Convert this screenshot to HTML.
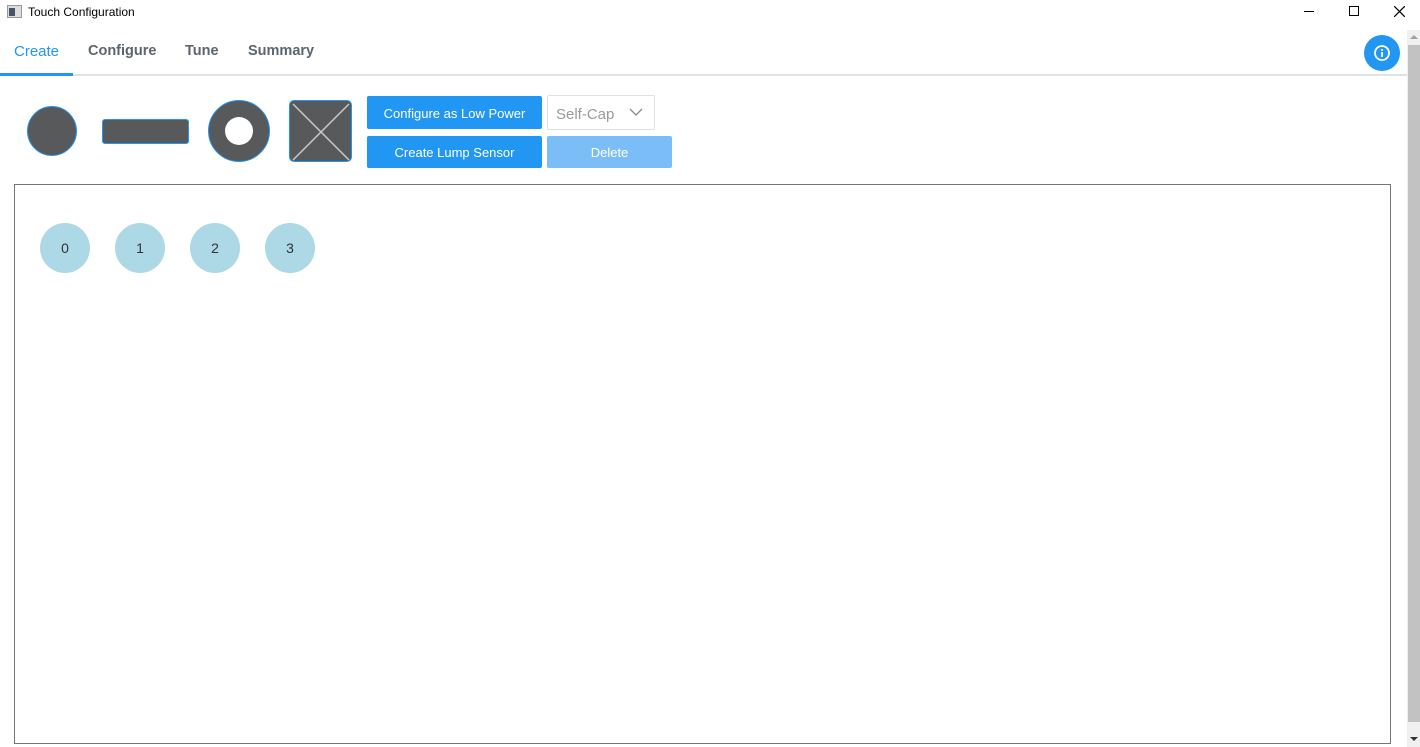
<!DOCTYPE html>
<html><head><meta charset="utf-8"><style>
*{box-sizing:border-box;margin:0;padding:0}
body{width:1420px;height:747px;background:#fff;font-family:"Liberation Sans",sans-serif;position:relative;overflow:hidden}
.a{position:absolute}
.tab{position:absolute;top:43px;font-size:14.5px;color:#5a6570;font-weight:bold}
.btn{position:absolute;background:#2196f3;color:#fff;font-size:13px;text-align:center;border-radius:2px}
.c{position:absolute;width:50px;height:50px;border-radius:50%;background:#add8e6;text-align:center;line-height:50px;font-size:14px;color:#333;top:223px}
</style></head><body>
<div class="a" style="left:7px;top:5px;width:15px;height:13px;border:1px solid #999;background:#ddd"><div style="position:absolute;left:1px;top:2px;width:6px;height:8px;background:#456"></div></div>
<div class="a" style="left:28px;top:5px;font-size:12px;color:#000">Touch Configuration</div>
<div class="a" style="left:1304px;top:11px;width:10px;height:1px;background:#000"></div>
<div class="a" style="left:1349px;top:6px;width:10px;height:10px;border:1px solid #000"></div>
<svg class="a" style="left:1394px;top:6px" width="11" height="11"><path d="M0 0L11 11M11 0L0 11" stroke="#000" stroke-width="1.2"/></svg>
<div class="tab" style="left:14px;color:#2196f3;font-weight:normal;font-size:15px">Create</div>
<div class="tab" style="left:88px">Configure</div>
<div class="tab" style="left:185px">Tune</div>
<div class="tab" style="left:248px">Summary</div>
<div class="a" style="left:0;top:74px;width:1407px;height:2px;background:#dfe1e5"></div>
<div class="a" style="left:0;top:73px;width:73px;height:3px;background:#2196f3"></div>
<div class="a" style="left:1364px;top:35px;width:36px;height:36px;border-radius:50%;background:#2196f3"></div>
<svg class="a" style="left:1373px;top:44px" width="18" height="18"><circle cx="9" cy="9" r="7" fill="none" stroke="#fff" stroke-width="1.8"/><rect x="8.1" y="8" width="1.8" height="5" fill="#fff"/><rect x="8.1" y="5" width="1.8" height="1.8" fill="#fff"/></svg>
<div class="a" style="left:1407px;top:30px;width:13px;height:717px;background:#f0f0f0"></div>
<div class="a" style="left:1408px;top:45px;width:12px;height:677px;background:#c2c2c2"></div>
<div class="a" style="left:1410px;top:35px;width:0;height:0;border:4px solid transparent;border-bottom-color:#a0a0a0;border-top:0"></div>
<div class="a" style="left:1410px;top:737px;width:0;height:0;border:4px solid transparent;border-top-color:#333;border-bottom:0"></div>
<div class="a" style="left:27px;top:106px;width:50px;height:50px;border-radius:50%;background:#58595b;border:1px solid #2196f3"></div>
<div class="a" style="left:102px;top:119px;width:87px;height:25px;border-radius:3px;background:#58595b;border:1px solid #2196f3"></div>
<div class="a" style="left:208px;top:100px;width:62px;height:62px;border-radius:50%;background:#58595b;border:1px solid #2196f3"></div>
<div class="a" style="left:225px;top:117px;width:28px;height:28px;border-radius:50%;background:#fff"></div>
<div class="a" style="left:289px;top:100px;width:63px;height:62px;border-radius:5px;background:#58595b;border:1px solid #2196f3;overflow:hidden"><svg width="63" height="62"><path d="M3 3L59 59M59 3L3 59" stroke="#c8c8c8" stroke-width="1.5"/></svg></div>
<div class="btn" style="left:367px;top:96px;width:175px;height:33px;line-height:35px">Configure as Low Power</div>
<div class="btn" style="left:367px;top:136px;width:175px;height:32px;line-height:34px">Create Lump Sensor</div>
<div class="btn" style="left:547px;top:136px;width:125px;height:32px;line-height:34px;background:#7bbef7">Delete</div>
<div class="a" style="left:547px;top:95px;width:108px;height:35px;border:1px solid #e0e0e0;border-radius:2px;font-size:15px;color:#9a9a9a;padding:10px 0 0 8px">Self-Cap</div>
<svg class="a" style="left:629px;top:108px" width="14" height="9"><path d="M1 1L7 7L13 1" fill="none" stroke="#888" stroke-width="1.3"/></svg>
<div class="a" style="left:14px;top:184px;width:1377px;height:560px;border:1px solid #777"></div>
<div class="c" style="left:40px">0</div>
<div class="c" style="left:115px">1</div>
<div class="c" style="left:190px">2</div>
<div class="c" style="left:265px">3</div>
</body></html>
